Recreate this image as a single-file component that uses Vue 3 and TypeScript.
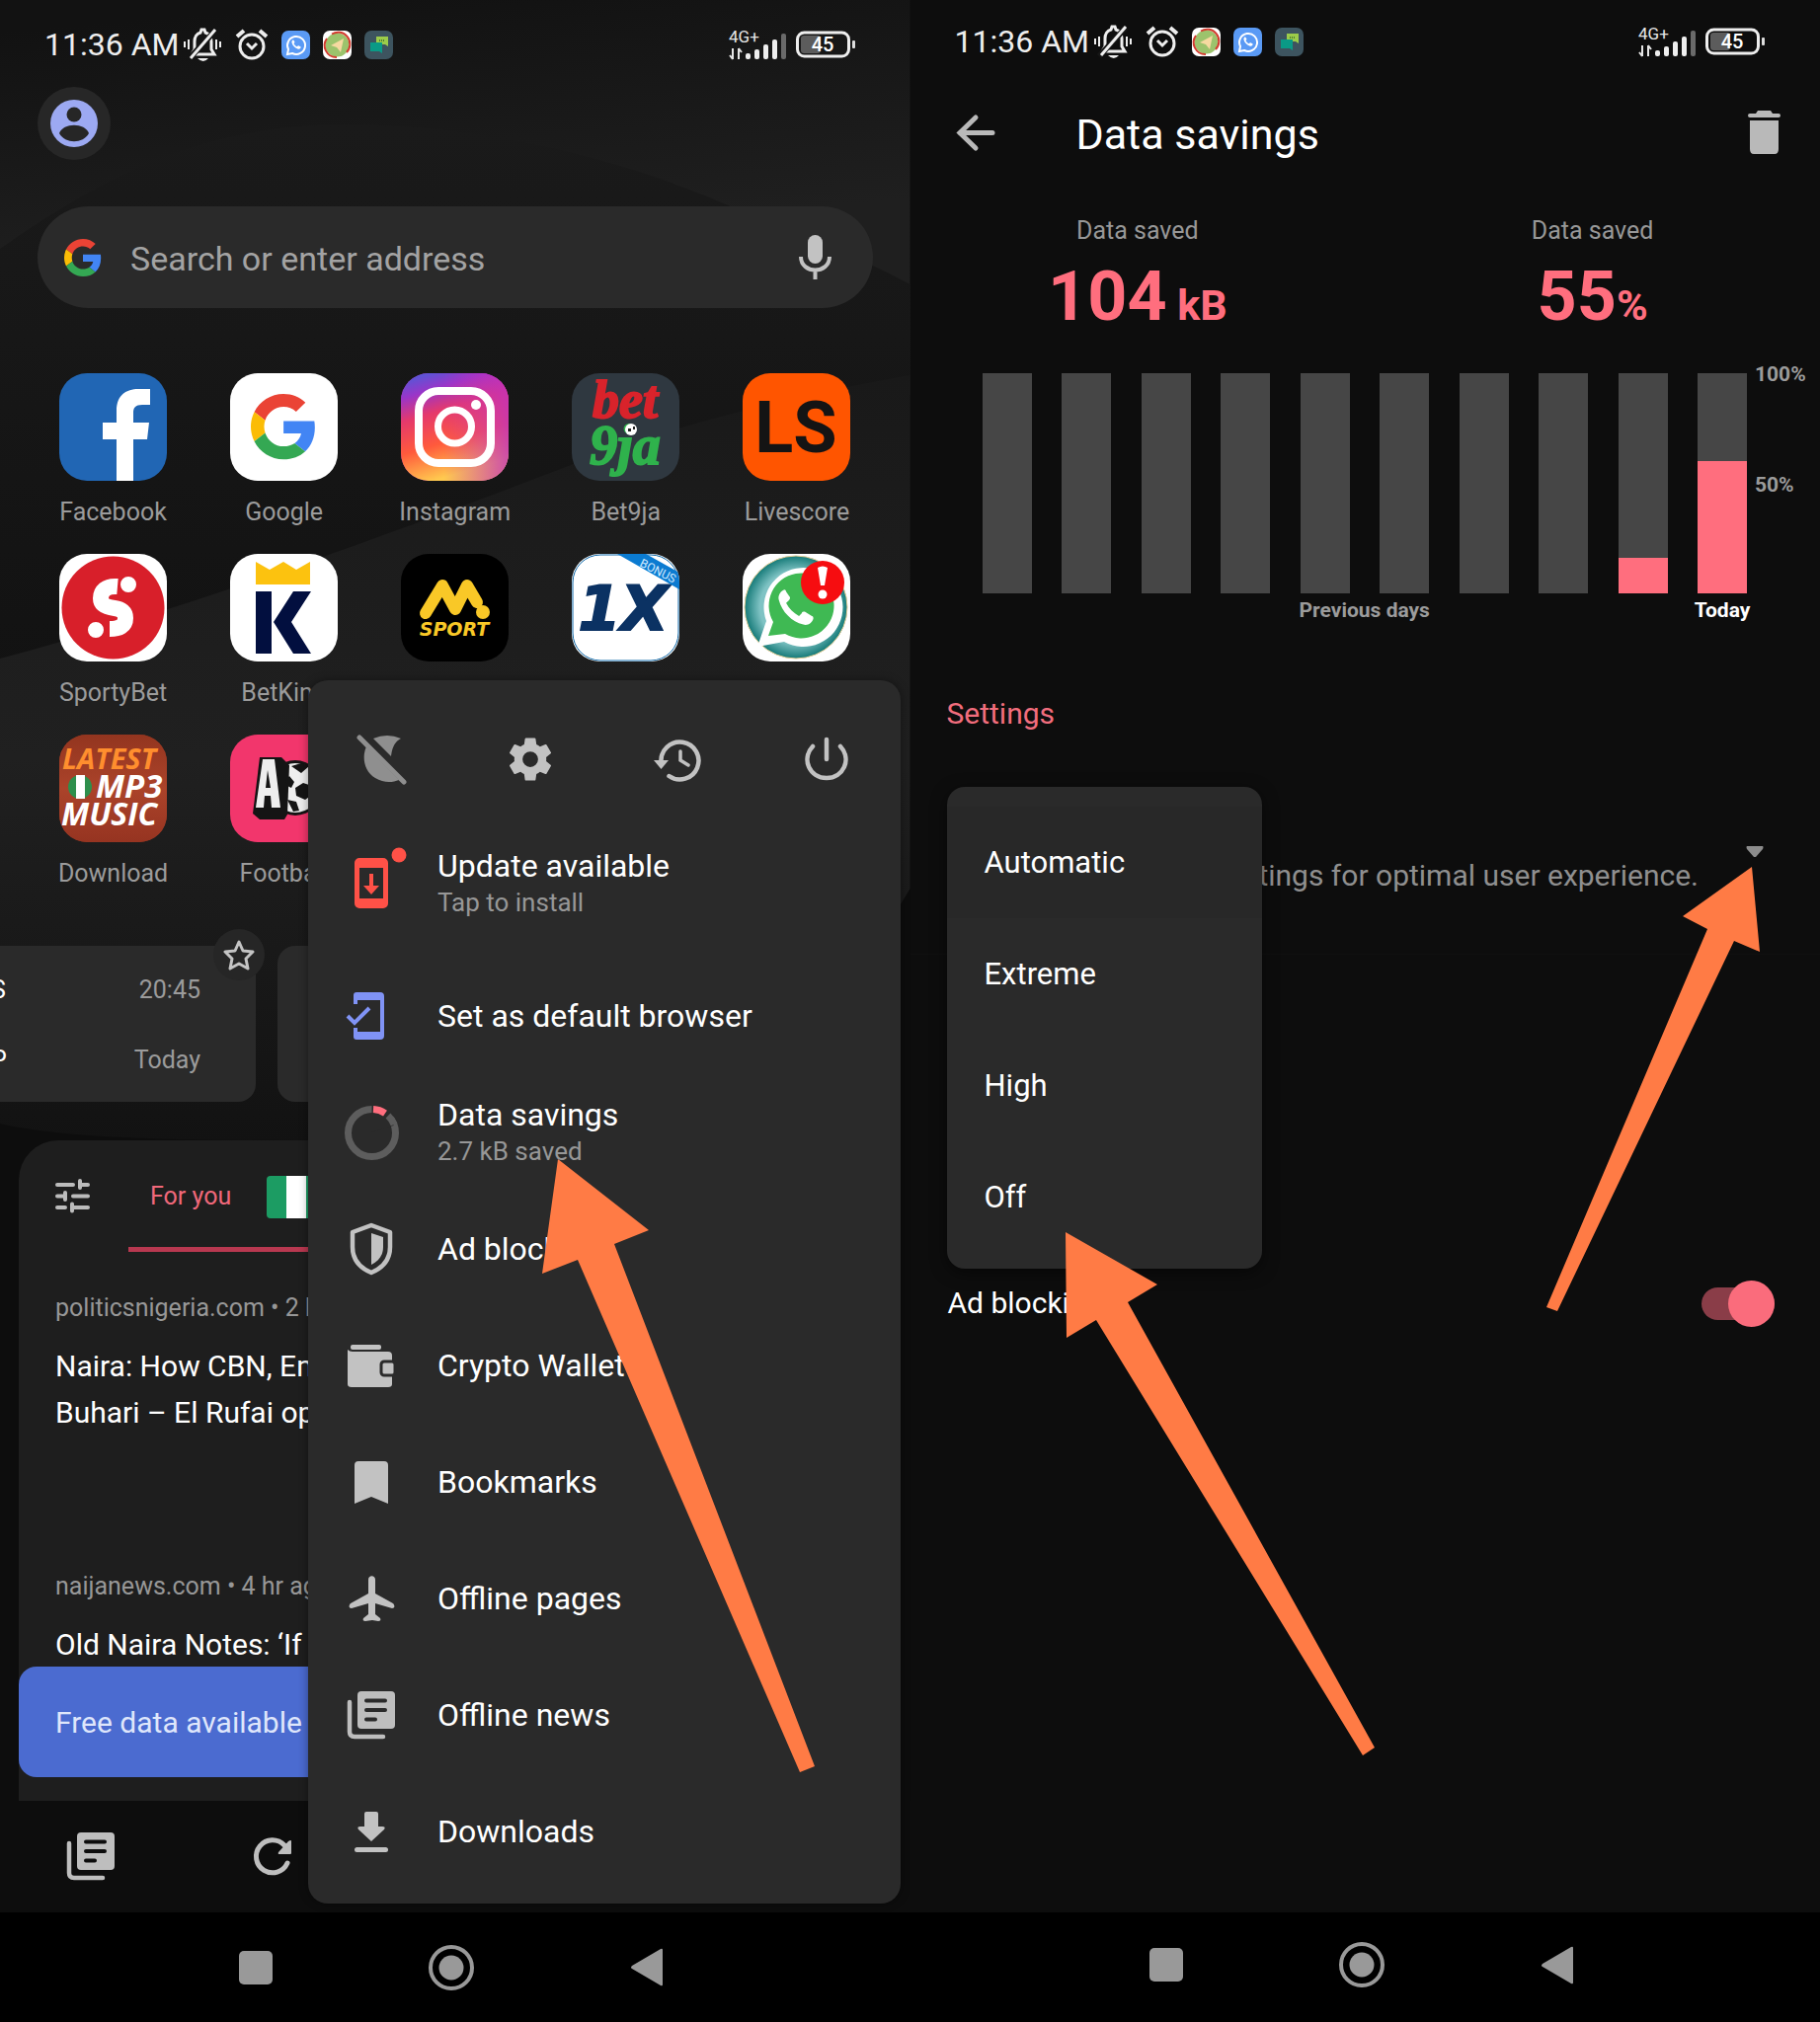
<script setup lang="ts">
import { h, ref } from 'vue'

interface GlyphProps { n: string; w: number; h: number; box?: string }
interface Tile { name: string; art: string; bg: string; hideLabel?: boolean }
interface MenuRow { title: string; sub?: string; icon: string; w: number; h: number; tall?: boolean }

const gParts =
  '<path fill="#ea4335" d="M24 9.500c3.540 0 6.710 1.220 9.210 3.600l6.850-6.850C35.900 2.380 30.470 0 24 0 14.620 0 6.510 5.380 2.560 13.220l7.980 6.190C12.430 13.720 17.740 9.500 24 9.500z"/><path fill="#4285f4" d="M46.980 24.550c0-1.570-.150-3.090-.380-4.550H24v9.020h12.940c-.580 2.960-2.260 5.480-4.780 7.180l7.730 6c4.510-4.180 7.090-10.360 7.090-17.650z"/><path fill="#fbbc05" d="M10.530 28.590c-.480-1.450-.760-2.990-.760-4.590s.270-3.140.760-4.590l-7.980-6.190C.920 16.460 0 20.120 0 24c0 3.880.920 7.540 2.560 10.780l7.970-6.190z"/><path fill="#34a853" d="M24 48c6.480 0 11.930-2.130 15.890-5.810l-7.730-6c-2.150 1.450-4.920 2.300-8.160 2.300-6.260 0-11.570-4.220-13.470-9.910l-7.980 6.190C6.510 42.620 14.620 48 24 48z"/>'

const handset =
  '<path d="M7 4c-2 1-4 4-3 7 2 8 9 15 17 17 3 1 6-1 7-4 0-1 0-2-1-2l-5-3c-1 0-2 0-2 1l-2 2c-4-2-7-5-9-9l2-2c1-1 1-2 0-3L9 5c0-1-1-2-2-1z"/>'

const glyphs: Record<string, string> = {
  google: gParts,
  bell: '<g fill="none" stroke="#eee" stroke-width="3"><path d="M10 27h22l-3-5V14c0-5-3-8-6-9l-1-3h-3l-1 3c-4 1-6 5-6 9v8l-3 5"/><path d="M33 3 6 32" stroke="#151515" stroke-width="6"/><path d="M33 2 8 31"/><path d="M6 12v10M2 14v6M34 12v10M38 14v6" stroke-width="2"/></g><path fill="#eee" d="M15 31h11q-5 6-11 0z"/>',
  alarm: '<g fill="none" stroke="#eee" stroke-width="3"><circle cx="17" cy="18" r="12"/><path d="M2 8 9 2M32 8l-7-6" stroke-width="4"/><path d="m12 15 5 5 5-5"/></g>',
  waSmall: '<rect width="29" height="29" rx="7" fill="#5a9af5"/><path d="M6 24l1-5a9 9 0 1 1 4 4z" fill="none" stroke="#fff" stroke-width="2"/><g transform="translate(9 8) scale(.38)" fill="#fff">' + handset + '</g>',
  tgSmall: '<rect width="29" height="29" rx="7" fill="#fff"/><circle cx="14.500" cy="14.500" r="12" fill="#9cc36c"/><path d="M14 27A12 12 0 0 1 4 8M9 3.500A12 12 0 0 1 24 22" fill="none" stroke="#d23a2e" stroke-width="2"/><path d="M8 15l13-7-3 14-4-5z" fill="#f6d9a0"/>',
  chatSmall: '<rect width="29" height="29" rx="7" fill="#3d545f"/><path d="M12 6h12v10l-3-2h-9z" fill="#9ccc4a"/><path d="M6 12h12v11l-3-2H6z" fill="#0a9a86"/><path d="M15 10h6" stroke="#4d7c2f" stroke-width="2" stroke-dasharray="1 1"/>',
  signal: '<text x="0" y="13" font-size="17" fill="#e6e6e6">4G+</text><path d="M4 19v11M1 26l3 4M10 30V19M10 19l3 4" fill="none" stroke="#e6e6e6" stroke-width="2"/><g fill="#eee"><rect x="17" y="24" width="5" height="6" rx="2"/><rect x="26" y="20" width="5" height="10" rx="2"/><rect x="35" y="15" width="5" height="15" rx="2"/><rect x="44" y="10" width="5" height="20" rx="2"/><rect x="53" y="4" width="5" height="26" rx="2" fill="#6a6a6a"/></g>',
  battery: '<rect x="5" y="5" width="20" height="18" rx="3" fill="#5c5c5c"/><rect x="1.500" y="2" width="52" height="24" rx="7" fill="none" stroke="#eee" stroke-width="3"/><rect x="57" y="10" width="3" height="8" rx="1" fill="#ddd"/><text x="27" y="21" font-size="20" font-weight="500" fill="#fff" text-anchor="middle">45</text>',
  user: '<circle cx="24" cy="24" r="24" fill="#9ca9f2"/><circle cx="24" cy="15" r="7.500" fill="#262626"/><path d="M9 34c4-11 26-11 30 0-6 11-24 11-30 0z" fill="#262626"/>',
  mic: '<rect x="9" y="0" width="15" height="29" rx="7.500" fill="#c2c2c2"/><path d="M2 22c0 18 29 18 29 0M16.500 36v9" fill="none" stroke="#c2c2c2" stroke-width="4"/>',
  moon: '<path d="M16 3q14-6 28 0c-6 3-9 9-10 18z" fill="#8f8f8f"/><path d="M9 11C4 22 7 37 18 43c8 5 17 5 24 2z" fill="#8f8f8f"/><path d="M2 2l45 45" stroke="#8f8f8f" stroke-width="5" stroke-linecap="round"/>',
  gear: '<path fill="#c2c2c2" d="M19.140 12.940c.040-.300.060-.610.060-.940 0-.320-.020-.640-.070-.940l2.030-1.580a.490.490 0 0 0 .120-.610l-1.920-3.320a.488.488 0 0 0-.590-.220l-2.390.960c-.500-.380-1.030-.700-1.620-.940l-.360-2.540a.484.484 0 0 0-.480-.410h-3.840c-.240 0-.430.170-.470.410l-.360 2.540c-.590.240-1.130.570-1.620.940l-2.390-.960c-.220-.080-.470 0-.590.220L2.740 8.870c-.120.210-.080.470.120.610l2.030 1.580c-.050.300-.090.630-.090.940s.020.640.070.940l-2.030 1.580a.490.490 0 0 0-.120.610l1.920 3.320c.120.220.370.290.590.220l2.390-.960c.500.380 1.030.700 1.620.940l.360 2.540c.050.240.240.410.480.410h3.840c.240 0 .440-.170.470-.410l.360-2.540c.590-.240 1.130-.560 1.620-.940l2.390.960c.220.080.470 0 .590-.220l1.920-3.320c.120-.220.070-.470-.120-.610l-2.010-1.580zM12 15.500a3.500 3.500 0 1 1 0-7 3.500 3.500 0 0 1 0 7z"/>',
  history: '<path d="M7.500 25a19 19 0 1 1 8 14" fill="none" stroke="#c2c2c2" stroke-width="4.500" stroke-linecap="round"/><path d="M0 23h15l-7.500 9z" fill="#c2c2c2"/><path d="M27 14v9l8 5" fill="none" stroke="#c2c2c2" stroke-width="3.500" stroke-linecap="round"/>',
  power: '<path d="M22 2v20M8 9c-12 13-3 32 14 32s26-19 14-32" fill="none" stroke="#c2c2c2" stroke-width="4.500" stroke-linecap="round"/>',
  update: '<path fill="#ff5147" fill-rule="evenodd" d="M15 8h24a5 5 0 0 1 5 5v41a5 5 0 0 1-5 5H15a5 5 0 0 1-5-5V13a5 5 0 0 1 5-5zm0 10v31h24V18z"/><path d="M27 24v15" stroke="#ff5147" stroke-width="4"/><path d="M19 36h16l-8 9z" fill="#ff5147"/><circle cx="55" cy="5" r="7.500" fill="#ff5147"/>',
  preset: '<path d="M9 12V3q0-1 1-1h24q2 0 2 2v40q0 2-2 2H10q-1 0-1-1v-9" fill="none" stroke="#8093f5" stroke-width="4"/><path d="M8 5h28M8 43h28" stroke="#8093f5" stroke-width="6"/><path d="M0 18h9v12H0z" fill="#2a2a2a"/><path d="m1 24 7 7 15-15" fill="none" stroke="#8093f5" stroke-width="4"/>',
  ring: '<circle cx="27.500" cy="27.500" r="24" fill="none" stroke="#5d5d5d" stroke-width="7"/><path d="M27.500 0h22v20l-22 7z" fill="#2a2a2a"/><path d="M44 10a24 24 0 0 1 6 9" fill="none" stroke="#5d5d5d" stroke-width="7"/><path d="M29 3.600a24 24 0 0 1 12 4" fill="none" stroke="#ff6e7e" stroke-width="7"/>',
  shield: '<path d="M22 2 41 9v15c0 12-7 21-19 26C10 45 3 36 3 24V9z" fill="none" stroke="#c2c2c2" stroke-width="4.500" stroke-linejoin="round"/><path d="M22 10l12 4v10c0 8-4 14-12 18z" fill="#c2c2c2"/>',
  wallet: '<rect x="3" y="0" width="31" height="5" rx="2" fill="#c2c2c2"/><path d="M0 5q2 2 5 2h36q4 0 4 4v29q0 3-4 3H4q-4 0-4-3z" fill="#c2c2c2"/><rect x="34" y="17" width="14" height="14" rx="3" fill="#c2c2c2" stroke="#2a2a2a" stroke-width="3"/>',
  bookmark: '<path d="M0 4q0-4 4-4h26q4 0 4 4v39l-17-7-17 7z" fill="#c2c2c2"/>',
  plane: '<path d="M19 4c0-5 7-5 7 0v14l18 10c2 2 2 5-1 5l-17-5v11l5 4c1 2 0 3-2 3l-6-1-7 1c-2 0-3-1-2-3l5-4V28L2 33c-3 0-3-3-1-5l18-10z" fill="#c2c2c2"/>',
  news: '<path d="M2 11v30q0 5 5 5h29" fill="none" stroke="#bebebe" stroke-width="4.500" stroke-linecap="round"/><rect x="10" y="0" width="38" height="38" rx="4" fill="#bebebe"/><path d="M19 9.500h19M19 19h19M19 28.500h9" stroke="var(--ink)" stroke-width="4" stroke-linecap="round"/>',
  download: '<path d="M10 2q0-2 2-2h10q2 0 2 2v13h4q4 0 2 3L17 30 4 18q-2-3 2-3h4z" fill="#c2c2c2"/><rect y="36" width="34" height="5" rx="2.500" fill="#c2c2c2"/>',
  star: '<path d="M17 3l4 9 10 1-7 7 2 10-9-5-9 5 2-10-7-7 10-1z" fill="none" stroke="#c4c4c4" stroke-width="3" stroke-linejoin="round"/>',
  tune: '<g fill="none" stroke="#bcbcbc" stroke-width="4" stroke-linecap="round"><path d="M2 6h16M26 6h7M25 2v7M2 17.500h7M18 17.500h15M10 14v7M2 29h8M18 29h15M17 25.500v7"/></g>',
  refresh: '<path d="M34 26a16.500 16.500 0 1 1-3-18" fill="none" stroke="#bebebe" stroke-width="5" stroke-linecap="round"/><path d="M38 4v12q0 1-1 1H26q-2 0-1-2L35 4q3-2 3 0z" fill="#bebebe"/>',
  square: '<rect width="34" height="34" rx="5" fill="#999"/>',
  home: '<circle cx="23" cy="23" r="21" fill="none" stroke="#999" stroke-width="4"/><circle cx="23" cy="23" r="12.500" fill="#999"/>',
  back: '<path d="M30 1q2-1 2 1v35q0 2-2 1L1 21q-2-1 0-3z" fill="#999"/>',
  arrow: '<path d="M36 17.500H3M19 2 3 17.500 19 33" fill="none" stroke="#b9b9b9" stroke-width="5" stroke-linecap="round"/>',
  trash: '<path d="M10 0h13l2 3h6q2 0 2 2t-2 2H2Q0 7 0 5t2-2h6z" fill="#b9b9b9"/><path d="M2 10h29v29q0 5-4 5H6q-4 0-4-5z" fill="#b9b9b9"/>',
  caret: '<path d="M1 0h16q1 1 0 3l-7 8H8L1 3Q0 1 1 0z" fill="#8c8c8c"/>',
}

const art: Record<string, string> = {
  facebook: '<path fill="#fff" d="M58 109V67H44V50H58V38C58 22 68 16 80 16H92V32H84C77 32 75 35 75 40V50H91L89 67H75V109Z"/>',
  google: '<g transform="translate(21 21) scale(1.380)">' + gParts + '</g>',
  instagram: '<defs><linearGradient id="ig1" x1="0" y1="0" x2=".3" y2="1"><stop offset="0" stop-color="#3f62dc"/><stop offset=".22" stop-color="#9a35c8"/><stop offset=".42" stop-color="#e5396c"/><stop offset=".7" stop-color="#ff5a3c"/><stop offset="1" stop-color="#ffc94f"/></linearGradient><linearGradient id="ig2" x1="0" y1="0" x2="1" y2="0"><stop offset=".4" stop-color="#c130c0" stop-opacity="0"/><stop offset="1" stop-color="#c130c0" stop-opacity=".8"/></linearGradient></defs><rect width="109" height="109" fill="url(#ig1)"/><rect width="109" height="109" fill="url(#ig2)"/><rect x="18" y="18" width="73" height="73" rx="20" fill="none" stroke="#fff" stroke-width="8"/><circle cx="54.500" cy="54" r="17" fill="none" stroke="#fff" stroke-width="7"/><circle cx="76" cy="32" r="5" fill="#fff"/>',
  bet9ja: '<g font-family="Liberation Serif, serif" font-weight="700" font-style="italic" stroke-width="2"><text x="54" y="45" font-size="54" text-anchor="middle" fill="#d9232b" stroke="#d9232b">bet</text><text x="54" y="92" font-size="56" text-anchor="middle" fill="#2fb24c" stroke="#2fb24c">9ja</text></g><circle cx="60" cy="57" r="6" fill="#fff"/><path d="M57 56h3v3h-3zM62 54h2v3h-2z" fill="#222"/>',
  livescore: '<text x="54" y="80" text-anchor="middle" font-size="72" font-weight="700" fill="#141414">LS</text>',
  sporty: '<circle cx="54.500" cy="54.500" r="52" fill="#d81f2a"/><path d="M59 33C47 32 42 38 42 45c0 7 6 9 14 10 7 1 11 4 11 10 0 8-6 11-16 11" fill="none" stroke="#fff" stroke-width="16"/><circle cx="70" cy="31" r="9" fill="#fff" stroke="#d81f2a" stroke-width="2"/><circle cx="37" cy="77" r="9" fill="#fff" stroke="#d81f2a" stroke-width="2"/>',
  king: '<path d="M26 8l14 8 14-8 13 8 14-8v23H26z" fill="#fcc20f"/><path d="M26 38h16v63H26zM64 38h18L62 69l20 32H64L44 69z" fill="#020f3f"/>',
  msport: '<path d="M25 60 42 32l13 24 12-24 10 17" fill="none" stroke="#f9c827" stroke-width="12" stroke-linecap="round" stroke-linejoin="round"/><circle cx="83" cy="59" r="7" fill="#f9c827"/><text x="54" y="83" text-anchor="middle" font-family="DejaVu Sans, sans-serif" font-size="19" font-weight="700" font-style="italic" fill="#f9c827">SPORT</text>',
  onex: '<rect x="1" y="1" width="107" height="107" rx="28" fill="#fff" stroke="#0d67a8"/><text x="52" y="77" text-anchor="middle" font-family="DejaVu Sans, sans-serif" font-size="62" font-weight="700" font-style="italic" fill="#0b3263" stroke="#0b3263" stroke-width="2">1X</text><path d="M46 0h29l34 19v17z" fill="#0b7bd1"/><text x="68" y="12" transform="rotate(27 68 12)" font-size="12" fill="#cfe9ff">BONUS</text>',
  whatsapp: '<defs><radialGradient id="wa"><stop offset=".7" stop-color="#7fc3c4"/><stop offset="1" stop-color="#157a78"/></radialGradient></defs><circle cx="54" cy="54" r="52" fill="url(#wa)" stroke="#e8cf96"/><path d="M15 94l9-26A40 40 0 1 1 42 89z" fill="#fff"/><path d="M26 83l5-14a33 33 0 1 1 12 12z" fill="#3fb953"/><g transform="translate(31 31) scale(1.450)" fill="#fff">' + handset + '</g><circle cx="81" cy="29" r="22" fill="#f60d10"/><path d="M76 14q5-3 10 0l-3 18h-4z" fill="#fff"/><circle cx="81" cy="41" r="4.500" fill="#fff"/>',
  mp3: '<defs><linearGradient id="mp" x1="0" y1="0" x2="0" y2="1"><stop offset="0" stop-color="#93351f"/><stop offset=".5" stop-color="#ab432a"/><stop offset="1" stop-color="#963421"/></linearGradient></defs><rect width="109" height="109" fill="url(#mp)"/><circle cx="21" cy="53" r="12" fill="#2d8f4c"/><rect x="17" y="41" width="9" height="24" fill="#fff"/><g font-family="Open Sans, sans-serif" font-weight="700" font-style="italic"><text x="3" y="35" font-size="29" fill="#ff8e2e">LATEST</text><text x="37" y="64" font-size="33" fill="#fff">MP3</text><text x="2" y="92" font-size="32" fill="#fff">MUSIC</text></g>',
  football: '<circle cx="66" cy="54" r="28" fill="#141414"/><circle cx="66" cy="54" r="25" fill="#eee"/><path d="M30 23h22l8 8-2 50-3 5H30l-7-6z" fill="#141414"/><path fill-rule="evenodd" fill="#eee" d="M33 25h12l6 49h-9l-1-12h-6l-1 12h-8zm5 11-2 18h5z"/><path d="M62 32l10-3 8 3-8 7zM56 46l4-4 5 6-3 6-4-2zM66 54l8-5 9 3v9l-7 5-9-4zM58 66l9 2 3 9-6 1z" fill="#141414"/>',
}

const Glyph = (p: GlyphProps) =>
  h('svg', { width: p.w, height: p.h, viewBox: p.box ?? `0 0 ${p.w} ${p.h}`, class: 'glyph', 'aria-hidden': 'true', innerHTML: glyphs[p.n] })
Glyph.props = ['n', 'w', 'h', 'box']

const tiles: Tile[] = [
  { name: 'Facebook', art: 'facebook', bg: '#2166b4' },
  { name: 'Google', art: 'google', bg: '#ffffff' },
  { name: 'Instagram', art: 'instagram', bg: '#c130c0' },
  { name: 'Bet9ja', art: 'bet9ja', bg: '#2f3840' },
  { name: 'Livescore', art: 'livescore', bg: '#ff5500' },
  { name: 'SportyBet', art: 'sporty', bg: '#ffffff' },
  { name: 'BetKing', art: 'king', bg: '#ffffff' },
  { name: 'MSport', art: 'msport', bg: '#000000', hideLabel: true },
  { name: '1xBet', art: 'onex', bg: '#ffffff', hideLabel: true },
  { name: 'WhatsApp', art: 'whatsapp', bg: '#ffffff', hideLabel: true },
  { name: 'Download', art: 'mp3', bg: '#93351f' },
  { name: 'Football', art: 'football', bg: '#f2366c' },
]

const tools = [
  { n: 'moon', w: 49, h: 49, box: '0 0 49 49', label: 'Night mode' },
  { n: 'gear', w: 54, h: 56, box: '0 0 24 24', label: 'Settings' },
  { n: 'history', w: 49, h: 44, box: '0 0 49 44', label: 'History' },
  { n: 'power', w: 44, h: 44, box: '0 0 44 44', label: 'Exit' },
]

const menu: MenuRow[] = [
  { title: 'Update available', sub: 'Tap to install', icon: 'update', w: 54, h: 68, tall: true },
  { title: 'Set as default browser', icon: 'preset', w: 50, h: 48 },
  { title: 'Data savings', sub: '2.7 kB saved', icon: 'ring', w: 55, h: 55 },
  { title: 'Ad blocking', icon: 'shield', w: 44, h: 52 },
  { title: 'Crypto Wallet', icon: 'wallet', w: 48, h: 43 },
  { title: 'Bookmarks', icon: 'bookmark', w: 34, h: 43 },
  { title: 'Offline pages', icon: 'plane', w: 45, h: 46 },
  { title: 'Offline news', icon: 'news', w: 49, h: 49 },
  { title: 'Downloads', icon: 'download', w: 34, h: 41 },
]

const days = [0, 0, 0, 0, 0, 0, 0, 0, 16, 60]
const modes = ['Automatic', 'Extreme', 'High', 'Off']
const mode = ref('Automatic')
const adBlock = ref(true)
const query = ref('')
const leftTray = ['waSmall', 'tgSmall', 'chatSmall']
const rightTray = ['tgSmall', 'waSmall', 'chatSmall']
</script>

<template>
  <main class="screens">
    <section class="phone start">
      <svg class="wallpaper" viewBox="0 0 922 1937" preserveAspectRatio="none" aria-hidden="true">
        <defs>
          <linearGradient id="sky" x1=".4" y1="0" x2=".6" y2="1">
            <stop offset="0" stop-color="#121212" /><stop offset=".6" stop-color="#1f1f1f" /><stop offset="1" stop-color="#1f1f1f" />
          </linearGradient>
          <linearGradient id="hill" x1="0" y1="0" x2="0" y2="1">
            <stop offset="0" stop-color="#1a1a1a" /><stop offset="1" stop-color="#121212" />
          </linearGradient>
          <linearGradient id="dune" x1="0" y1="0" x2="0" y2="1">
            <stop offset="0" stop-color="#191919" /><stop offset=".5" stop-color="#202020" /><stop offset="1" stop-color="#121212" />
          </linearGradient>
        </defs>
        <rect width="922" height="1937" fill="#0d0d0d" />
        <rect width="922" height="400" fill="url(#sky)" />
        <path d="M0 252C110 175 210 126 350 126C500 126 640 165 740 209C820 240 880 265 922 288V600L0 700Z" fill="url(#hill)" />
        <path d="M0 667C180 620 400 540 620 455C740 415 840 395 922 380V900C820 1080 560 1155 300 1155C160 1155 60 1152 0 1138Z" fill="url(#dune)" />
      </svg>

      <header class="status">
        <span class="clock">11:36 AM<Glyph n="bell" :w="40" :h="35" /></span>
        <Glyph n="alarm" :w="34" :h="32" />
        <Glyph v-for="t in leftTray" :key="t" :n="t" :w="29" :h="29" />
        <span class="radio"><Glyph n="signal" :w="58" :h="30" /><Glyph n="battery" :w="60" :h="28" /></span>
      </header>

      <button class="profile" aria-label="Account"><Glyph n="user" :w="48" :h="48" /></button>

      <form class="search" @submit.prevent>
        <Glyph n="google" :w="38" :h="38" box="0 0 48 48" />
        <input v-model="query" type="text" aria-label="Search or enter address" placeholder="Search or enter address" />
        <button type="button" aria-label="Voice search"><Glyph n="mic" :w="33" :h="45" /></button>
      </form>

      <nav class="tiles">
        <a v-for="t in tiles" :key="t.name" href="#" class="tile" :aria-label="t.name">
          <svg class="art" viewBox="0 0 109 109" :style="{ background: t.bg }" v-html="art[t.art]" />
          <span v-if="!t.hideLabel">{{ t.name }}</span>
        </a>
      </nav>

      <div class="matches">
        <article class="match">
          <div class="line"><b>S</b><span>20:45</span></div>
          <div class="line"><b>P</b><span>Today</span></div>
          <button class="fav" aria-label="Favourite"><Glyph n="star" :w="34" :h="33" /></button>
        </article>
        <article class="match next"></article>
      </div>

      <section class="feed">
        <div class="tabs">
          <button class="tune" aria-label="Customise"><Glyph n="tune" :w="35" :h="35" /></button>
          <div class="tabline">
            <button class="tab">For you</button>
            <span class="flag"></span>
          </div>
        </div>
        <article class="story">
          <p>politicsnigeria.com • 2 hr</p>
          <h2>Naira: How CBN, Em<br />Buhari – El Rufai op</h2>
        </article>
        <article class="story">
          <p>naijanews.com • 4 hr ago</p>
          <h2>Old Naira Notes: ‘If</h2>
        </article>
        <a href="#" class="banner">Free data available</a>
      </section>

      <nav class="bottom">
        <button aria-label="News"><Glyph n="news" :w="49" :h="49" /></button>
        <button aria-label="Reload"><Glyph n="refresh" :w="39" :h="39" /></button>
      </nav>

      <aside class="menu">
        <div class="tools">
          <button v-for="t in tools" :key="t.n" :aria-label="t.label"><Glyph :n="t.n" :w="t.w" :h="t.h" :box="t.box" /></button>
        </div>
        <button v-for="m in menu" :key="m.title" class="row" :class="{ tall: m.tall }">
          <span class="ico"><Glyph :n="m.icon" :w="m.w" :h="m.h" /></span>
          <span class="words"><span class="title">{{ m.title }}</span><small v-if="m.sub">{{ m.sub }}</small></span>
        </button>
      </aside>

      <svg class="pointer one" width="277" height="622" viewBox="548 1173 277 622" aria-hidden="true">
        <path d="M565 1174 657 1246 622 1260 825 1789 810 1795 585 1276 549 1290z" fill="#ff7b45" />
      </svg>

      <footer class="sys">
        <button aria-label="Recents"><Glyph n="square" :w="34" :h="34" /></button>
        <button aria-label="Home"><Glyph n="home" :w="46" :h="46" /></button>
        <button aria-label="Back"><Glyph n="back" :w="32" :h="39" /></button>
      </footer>
    </section>

    <section class="phone savings">
      <header class="status">
        <span class="clock">11:36 AM<Glyph n="bell" :w="40" :h="35" /></span>
        <Glyph n="alarm" :w="34" :h="32" />
        <Glyph v-for="t in rightTray" :key="t" :n="t" :w="29" :h="29" />
        <span class="radio"><Glyph n="signal" :w="58" :h="30" /><Glyph n="battery" :w="60" :h="28" /></span>
      </header>

      <div class="appbar">
        <button aria-label="Back"><Glyph n="arrow" :w="38" :h="35" /></button>
        <h1>Data savings</h1>
        <button aria-label="Clear"><Glyph n="trash" :w="33" :h="44" /></button>
      </div>

      <div class="stats">
        <div><p>Data saved</p><strong>104<em>&nbsp;kB</em></strong></div>
        <div><p>Data saved</p><strong>55<em>%</em></strong></div>
      </div>

      <div class="chart">
        <div class="bars">
          <div v-for="(d, i) in days" :key="i" class="bar"><i v-if="d" :style="{ height: d + '%' }"></i></div>
        </div>
        <div class="scale"><span>100%</span><span>50%</span></div>
        <div class="legend"><span class="prev">Previous days</span><span class="today">Today</span></div>
      </div>

      <h3>Settings</h3>

      <div class="mode">
        <p>settings for optimal user experience.</p>
        <button class="caret" aria-label="Choose mode"><Glyph n="caret" :w="18" :h="11" /></button>
        <ul class="options">
          <li v-for="m in modes" :key="m"><button :class="{ on: m === mode }" @click="mode = m">{{ m }}</button></li>
        </ul>
      </div>

      <label class="adblock">
        <span>Ad blocking</span>
        <input v-model="adBlock" type="checkbox" />
      </label>

      <svg class="pointer two" width="216" height="451" viewBox="1566 877 216 451" aria-hidden="true">
        <path d="M1774 878 1704 928 1729 941 1566 1324 1577 1328 1756 953 1782 964z" fill="#ff7b45" />
      </svg>
      <svg class="pointer three" width="313" height="530" viewBox="1079 1248 313 530" aria-hidden="true">
        <path d="M1079 1248 1172 1301 1142 1319 1392 1770 1380 1778 1110 1337 1080 1355z" fill="#ff7b45" />
      </svg>

      <footer class="sys">
        <button aria-label="Recents"><Glyph n="square" :w="34" :h="34" /></button>
        <button aria-label="Home"><Glyph n="home" :w="46" :h="46" /></button>
        <button aria-label="Back"><Glyph n="back" :w="32" :h="39" /></button>
      </footer>
    </section>
  </main>
</template>

<style>
body {
  margin: 0;
  background: #0d0d0d;
}
.glyph {
  display: block;
  flex: none;
  overflow: visible;
}
</style>

<style scoped>
* {
  box-sizing: border-box;
}
.screens {
  display: grid;
  grid-template-columns: 1fr 1fr;
  min-height: 100vh;
  font-family: Roboto, "Liberation Sans", sans-serif;
  color: #fff;
}
button {
  font: inherit;
  color: inherit;
  background: none;
  border: 0;
  padding: 0;
  text-align: left;
}
a {
  color: inherit;
  text-decoration: none;
}
h1, h2, h3, p, ul {
  margin: 0;
  padding: 0;
  font-weight: 400;
  list-style: none;
}
.phone {
  position: relative;
  display: flex;
  flex-direction: column;
  min-width: 0;
  overflow: hidden;
  background: #0d0d0d;
}
.phone > * {
  position: relative;
}
.phone > .wallpaper {
  position: absolute;
  left: 0;
  top: 0;
  width: 100%;
  height: calc(100% - 111px);
}

/* status bar */
.status {
  display: flex;
  align-items: center;
  gap: 13px;
  height: 84px;
  padding: 0 56px 0 45px;
  color: #eee;
}
.start .status {
  height: 88px;
  padding-top: 2px;
}
.clock {
  display: flex;
  align-items: center;
  gap: 4px;
  font-size: 32px;
  line-height: 40px;
}
.radio {
  display: flex;
  align-items: center;
  gap: 10px;
  margin-left: auto;
}

/* start page */
.profile {
  display: flex;
  align-items: center;
  justify-content: center;
  width: 74px;
  height: 74px;
  margin-left: 38px;
  border-radius: 50%;
  background: #272727;
}
.search {
  display: flex;
  align-items: center;
  gap: 29px;
  height: 103px;
  margin: 47px 38px 0;
  padding: 0 42px 0 27px;
  border-radius: 52px;
  background: #2a2a2a;
}
.search input {
  flex: 1;
  min-width: 0;
  padding: 2px 0 0;
  border: 0;
  outline: 0;
  background: none;
  color: #fff;
  font: 34px/40px Roboto, "Liberation Sans", sans-serif;
}
.search input::placeholder {
  color: #a3a3a3;
  opacity: 1;
}
.tiles {
  display: grid;
  grid-template-columns: repeat(5, 1fr);
  grid-auto-rows: 183px;
  margin: 66px 28px 0;
}
.tile {
  display: flex;
  flex-direction: column;
  align-items: center;
  gap: 17px;
  font-size: 25px;
  line-height: 30px;
  color: #9b9b9b;
}
.art {
  width: 109px;
  height: 109px;
  border-radius: 28px;
}
.matches {
  display: flex;
  gap: 22px;
  margin: 31px 19px 0 0;
}
.match {
  position: relative;
  display: flex;
  flex-direction: column;
  justify-content: center;
  gap: 35px;
  width: 259px;
  height: 158px;
  padding: 2px 56px 0 0;
  border-radius: 0 18px 18px 0;
  background: #2a2a2a;
}
.match.next {
  flex: 1;
  border-radius: 18px;
}
.line {
  display: flex;
  justify-content: space-between;
  margin-left: -9px;
  font-size: 25px;
  line-height: 36px;
  color: #9b9b9b;
}
.line b {
  font-weight: 400;
  color: #fff;
}
.fav {
  position: absolute;
  right: -9px;
  top: -17px;
  display: flex;
  align-items: center;
  justify-content: center;
  width: 52px;
  height: 52px;
  border-radius: 50%;
  background: #262626;
}
.feed {
  flex: 1;
  display: flex;
  flex-direction: column;
  margin: 39px 19px 0;
  padding: 0 37px;
  border-radius: 40px 40px 0 0;
  background: #1e1e1e;
}
.tabs {
  display: flex;
  align-items: stretch;
  gap: 39px;
  height: 113px;
  margin-bottom: 39px;
}
.tune {
  display: flex;
  align-items: center;
}
.tabline {
  flex: 1;
  display: flex;
  align-items: center;
  gap: 36px;
  padding: 6px 0 0 22px;
  border-bottom: 5px solid #b83850;
}
.tab {
  font-size: 25px;
  line-height: 32px;
  color: #f0687a;
}
.flag {
  width: 60px;
  height: 43px;
  border-radius: 4px;
  background: linear-gradient(90deg, #1c9c63 0 20px, #fff 20px 40px, #1c9c63 40px);
}
.story {
  height: 282px;
  white-space: nowrap;
}
.story + .story {
  height: 180px;
}
.story p {
  font-size: 25px;
  line-height: 36px;
  color: #979797;
}
.story h2 {
  margin-top: 17px;
  font-size: 30px;
  line-height: 47px;
}
.banner {
  position: absolute;
  left: 0;
  right: 0;
  bottom: 24px;
  height: 112px;
  padding-left: 37px;
  border-radius: 18px;
  background: #4b6bd0;
  font-size: 30px;
  line-height: 114px;
  color: #dfe6fb;
}
.bottom {
  --ink: #0d0d0d;
  display: flex;
  align-items: center;
  gap: 140px;
  height: 113px;
  padding-left: 68px;
  background: #0d0d0d;
}
.phone > .menu {
  --ink: #2a2a2a;
  position: absolute;
  left: 312px;
  right: 10px;
  top: 689px;
  padding-bottom: 14px;
  border-radius: 20px;
  background: #2a2a2a;
  box-shadow: 0 0 10px #00000066;
}
.tools {
  display: grid;
  grid-template-columns: repeat(4, 1fr);
  height: 125px;
  padding-top: 35px;
}
.tools button {
  display: flex;
  align-items: center;
  justify-content: center;
}
.row {
  display: grid;
  grid-template-columns: 64px 1fr;
  gap: 35px;
  align-items: center;
  width: 100%;
  height: 118px;
  padding-left: 32px;
}
.row.tall {
  height: 156px;
  padding-top: 5px;
}
.ico {
  display: flex;
  justify-content: center;
}
.words {
  display: flex;
  flex-direction: column;
}
.title {
  font-size: 32px;
  line-height: 38px;
}
.words small {
  font-size: 26px;
  line-height: 36px;
  color: #979797;
}

/* data savings page */
.appbar {
  display: flex;
  align-items: center;
  height: 100px;
  padding: 0 40px 0 47px;
}
.appbar h1 {
  flex: 1;
  margin-left: 83px;
  padding-top: 4px;
  font-size: 43px;
  line-height: 50px;
}
.stats {
  display: grid;
  grid-template-columns: 1fr 1fr;
  margin-top: 34px;
  text-align: center;
}
.stats p {
  font-size: 25px;
  line-height: 32px;
  color: #979797;
}
.stats strong {
  display: block;
  height: 80px;
  margin-top: 10px;
  font-size: 70px;
  line-height: 80px;
  color: #ff6e7e;
}
.stats em {
  font-size: 43px;
  font-style: normal;
}
.chart {
  margin: 38px 74px 0 73px;
  font-size: 21px;
  font-weight: 700;
  line-height: 24px;
  color: #9b9b9b;
}
.bars {
  display: flex;
  justify-content: space-between;
  height: 223px;
}
.bar {
  display: flex;
  align-items: flex-end;
  width: 50px;
  background: #464646;
}
.bar i {
  width: 100%;
  background: #ff6e7e;
}
.scale {
  position: absolute;
  left: calc(100% + 8px);
  top: -11px;
  display: grid;
  gap: 88px;
}
.legend {
  display: grid;
  grid-template-columns: 1fr auto 1fr;
  margin-top: 5px;
}
.prev {
  grid-column: 2;
}
.today {
  display: flex;
  justify-content: center;
  justify-self: end;
  width: 50px;
  color: #fff;
}
h3 {
  margin: 75px 0 0 37px;
  font-size: 30px;
  line-height: 36px;
  color: #f26d7d;
}
.mode {
  display: flex;
  align-items: center;
  justify-content: flex-end;
  height: 186px;
  margin-top: 40px;
  padding-right: 57px;
  border-bottom: 1px solid #101010;
}
.mode p {
  margin-top: 26px;
  font-size: 30px;
  line-height: 40px;
  color: #8f8f8f;
}
.caret {
  margin: 0 0 22px 48px;
}
.options {
  position: absolute;
  left: 37px;
  top: 16px;
  width: 319px;
  padding: 20px 0 16px;
  border-radius: 18px;
  background: #2a2a2a;
  box-shadow: 0 4px 16px #00000080;
}
.options button {
  display: block;
  width: 100%;
  height: 113px;
  padding-left: 38px;
  font-size: 31px;
}
.options .on {
  background: #282828;
}
.adblock {
  display: flex;
  align-items: center;
  justify-content: space-between;
  height: 120px;
  margin: 293px 46px auto 38px;
  font-size: 30px;
  line-height: 36px;
}
.adblock input {
  appearance: none;
  position: relative;
  width: 74px;
  height: 33px;
  margin: 0;
  border-radius: 17px;
  background: #8a3d48;
}
.adblock input::after {
  content: "";
  position: absolute;
  right: 0;
  top: -7px;
  width: 47px;
  height: 47px;
  border-radius: 50%;
  background: #fa6c7c;
}

/* pointers over the content */
.phone > .pointer {
  position: absolute;
  pointer-events: none;
}
.one {
  left: 548px;
  top: 1173px;
}
.two {
  right: 61px;
  top: 877px;
}
.three {
  left: 157px;
  top: 1248px;
}

/* system navigation */
.sys {
  display: grid;
  grid-template-columns: repeat(3, 198px);
  justify-content: center;
  justify-items: center;
  align-items: center;
  height: 111px;
  padding-right: 7px;
  background: #000;
}
.savings .sys {
  padding-bottom: 5px;
}
</style>
